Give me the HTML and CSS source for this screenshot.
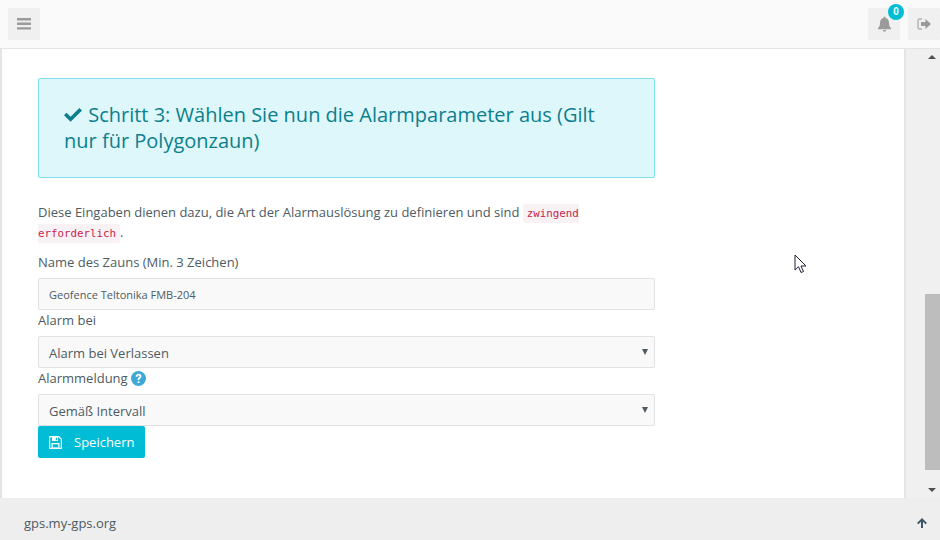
FILE: index.html
```html
<!DOCTYPE html>
<html lang="de">
  <head>
    <meta charset="UTF-8" />
    <title>Geofence</title>
    <link rel="stylesheet" href="styles.css">
  </head>

  <body>
    <header class="topbar">
      <button class="top-button">
        <svg class="icon-menu" viewBox="0 0 14 12"><path d="M0 0h14v2.4H0zM0 4.6h14v2.4H0zM0 9.2h14v2.4H0z"/></svg>
      </button>
      <div class="top-right">
        <button class="top-button bell">
          <svg class="icon-bell" viewBox="0 0 16 16"><path d="M8 0c.6 0 1 .4 1 1v.6c2.4.4 3.7 2.3 3.7 4.6 0 3.6 1 5 2.3 6.3v1H1v-1c1.300-1.300 2.300-2.700 2.300-6.300 0-2.300 1.300-4.200 3.700-4.600V1c0-.6.4-1 1-1zM6.200 14.300h3.600C9.700 15.300 9 16 8 16s-1.700-.7-1.800-1.700z"/></svg>
          <span class="badge">0</span>
        </button>
        <button class="top-button">
          <svg class="icon-signout" viewBox="0 0 14 12"><path d="M5 1H2.500C1.700 1 1 1.700 1 2.500v7c0 .8.7 1.500 1.500 1.500H5" fill="none" stroke="#b5b5b5" stroke-width="1.500"/><path d="M8.500 1 14 6l-5.500 5V8H4V4h4.500z"/></svg>
        </button>
      </div>
    </header>

    <div class="middle">
      <main class="content">
        <div class="alert">
          <h4 class="alert-title">
            <svg class="icon-check" viewBox="0 0 18 14"><path d="M6.600 13.800 0 7.200l2.500-2.500 4.100 4.100L15.400 0 18 2.500z"/></svg>
            Schritt 3: Wählen Sie nun die Alarmparameter aus (Gilt nur für Polygonzaun)
          </h4>
        </div>

        <p class="intro">
          Diese Eingaben dienen dazu, die Art der Alarmauslösung zu definieren und sind
          <code class="code code-start">zwingend</code>
          <code class="code code-end">erforderlich</code>.
        </p>

        <label class="field-label first">Name des Zauns (Min. 3 Zeichen)</label>
        <div class="field field-small">Geofence Teltonika FMB-204</div>

        <label class="field-label">Alarm bei</label>
        <div class="field">Alarm bei Verlassen<span class="caret"></span></div>

        <label class="field-label">
          Alarmmeldung
          <svg class="icon-help" viewBox="0 0 16 16">
            <circle cx="8" cy="8" r="8" fill="#3fa9d6"/>
            <path d="M5 6c.1-1.900 1.400-3 3.100-3 1.800 0 3.100 1.100 3.100 2.700 0 1.300-.8 1.900-1.500 2.400-.5.4-.8.6-.8 1.100v.3H7.100v-.5c0-1 .5-1.500 1.100-2 .5-.4.900-.7.900-1.300 0-.6-.4-1-1-1-.7 0-1.100.5-1.200 1.300zM7.100 10.800h1.900v1.900H7.100z" fill="#fff"/>
          </svg>
        </label>
        <div class="field">Gemäß Intervall<span class="caret"></span></div>

        <button class="save-button">
          <svg class="icon-save" viewBox="0 0 13 13">
            <path fill-rule="evenodd" d="M1 0h9l3 3v9c0 .6-.4 1-1 1H1c-.6 0-1-.4-1-1V1c0-.6.4-1 1-1zM1.200 1.200v10.600h10.600V3.500L9.500 1.200z"/>
            <path fill-rule="evenodd" d="M3 1h6v4H3zM6.800 1.800v2.400h1.300V1.800z"/>
            <path fill-rule="evenodd" d="M2.500 7h8v5.500h-8zM3.700 8.200v3.200h5.600V8.200z"/>
          </svg>
          Speichern
        </button>
      </main>

      <div class="scrollbar">
        <span class="arrow-up"></span>
        <div class="track"><div class="thumb"></div></div>
        <span class="arrow-down"></span>
      </div>

      <svg class="cursor" viewBox="0 0 13 20"><path d="M1 1v15l3.500-3.300L7 18.500l2.500-1-2.500-5.500h5z" fill="#fff" stroke="#22223a" stroke-width="1"/></svg>
    </div>

    <footer class="footer">
      <span>gps.my-gps.org</span>
      <svg class="icon-up" viewBox="0 0 10 10"><path d="M5 0 10 5 8.600 6.300 6 3.800V10H4V3.800L1.400 6.300 0 5z"/></svg>
    </footer>
  </body>
</html>
```

FILE: styles.css
```css
* {
  box-sizing: border-box;
}

html,
body {
  height: 100%;
}

body {
  margin: 0;
  display: flex;
  flex-direction: column;
  height: 540px;
  overflow: hidden;
  font-family: "Open Sans", sans-serif;
  font-size: 13px;
  color: #4d5b63;
  background: #fff;
}

/* --- Top bar --- */

.topbar {
  height: 49px;
  flex: none;
  display: flex;
  justify-content: space-between;
  padding: 8px 0 0 8px;
  background: #fafafa;
  border-bottom: 1px solid #e4e4e4;
}

.top-right {
  display: flex;
  gap: 8px;
}

.top-button {
  position: relative;
  width: 32px;
  height: 32px;
  padding: 0;
  display: flex;
  align-items: center;
  justify-content: center;
  background: #f0f0f0;
  border: 0;
  border-radius: 2px;
}

.icon-menu {
  width: 14px;
  height: 12px;
  fill: #9a9a9a;
}

.icon-bell {
  width: 15px;
  height: 16px;
  fill: #9a9a9a;
}

.icon-signout {
  width: 14px;
  height: 12px;
  fill: #9a9a9a;
}

.badge {
  position: absolute;
  top: -4px;
  right: -4px;
  width: 16px;
  height: 16px;
  border-radius: 50%;
  background: #00bcd4;
  color: #fff;
  font-size: 10px;
  font-weight: 700;
  line-height: 16px;
  text-align: center;
}

/* --- Middle --- */

.middle {
  position: relative;
  flex: 1;
  display: flex;
  min-height: 0;
}

.content {
  flex: 1;
  padding: 29px 249px 0 36px;
  border-left: 2px solid #e4e4e4;
  border-right: 2px solid #e4e4e4;
  display: flex;
  flex-direction: column;
  align-items: stretch;
}

/* --- Alert --- */

.alert {
  height: 100px;
  padding: 23px 25px;
  background: #def7fa;
  border: 1px solid #7fdfea;
  border-radius: 2px;
}

.alert-title {
  margin: 0;
  font-size: 20px;
  font-weight: 400;
  line-height: 26px;
  color: #0b7f8d;
}

.icon-check {
  width: 18px;
  height: 14px;
  margin-right: 1px;
  fill: #0b7f8d;
}

/* --- Form --- */

.intro {
  margin: 24px 0 0;
  line-height: 20px;
}

.code {
  padding: 3px 0;
  background: #f9f2f4;
  border-radius: 2px;
  color: #c7254e;
  font-family: "DejaVu Sans Mono", monospace;
  font-size: 10.800px;
  line-height: 1;
}

.code-start {
  padding-left: 4px;
  border-radius: 2px 0 0 2px;
}

.code-end {
  padding-right: 4px;
  border-radius: 0 2px 2px 0;
}

.field-label {
  display: block;
  height: 26px;
  padding-top: 1px;
  line-height: 18px;
}

.field-label.first {
  margin-top: 10px;
}

.field {
  position: relative;
  flex: none;
  height: 32px;
  padding: 1px 10px 0;
  display: flex;
  align-items: center;
  background: #f9f9f9;
  border: 1px solid #e2e2e2;
  border-radius: 2px;
}

.field-small {
  font-size: 11px;
}

.caret {
  position: absolute;
  right: 6px;
  top: 12px;
  border-left: 3px solid transparent;
  border-right: 3px solid transparent;
  border-top: 6px solid #4d5b63;
}

.icon-help {
  width: 15px;
  height: 15px;
  vertical-align: -3px;
}

.save-button {
  width: 107px;
  height: 32px;
  padding: 0 0 0 11px;
  display: flex;
  align-items: center;
  gap: 12px;
  background: #00bcd4;
  border: 0;
  border-radius: 2px;
  color: #fff;
  font-family: inherit;
  font-size: 13px;
}

.icon-save {
  width: 13px;
  height: 13px;
  fill: #fff;
}

/* --- Scrollbar --- */

.scrollbar {
  width: 34px;
  flex: none;
  display: flex;
  flex-direction: column;
  align-items: flex-end;
  background: #f0f0f0;
}

.arrow-up {
  margin: 6px 4px 0 0;
  border-left: 4px solid transparent;
  border-right: 4px solid transparent;
  border-bottom: 4px solid #505050;
}

.arrow-down {
  margin: 0 4px 6px 0;
  border-left: 4px solid transparent;
  border-right: 4px solid transparent;
  border-top: 4px solid #505050;
}

.track {
  flex: 1;
  width: 15px;
  padding-top: 235px;
  padding-bottom: 18px;
  display: flex;
}

.thumb {
  flex: 1;
  background: #bdbdbd;
}

.cursor {
  position: absolute;
  left: 794px;
  top: 205px;
  width: 13px;
  height: 20px;
}

/* --- Footer --- */

.footer {
  height: 42px;
  flex: none;
  display: flex;
  align-items: center;
  justify-content: space-between;
  padding: 10px 13px 2px 24px;
  background: #eeeeee;
}

.icon-up {
  width: 10px;
  height: 10px;
  fill: #3b5566;
}
```
